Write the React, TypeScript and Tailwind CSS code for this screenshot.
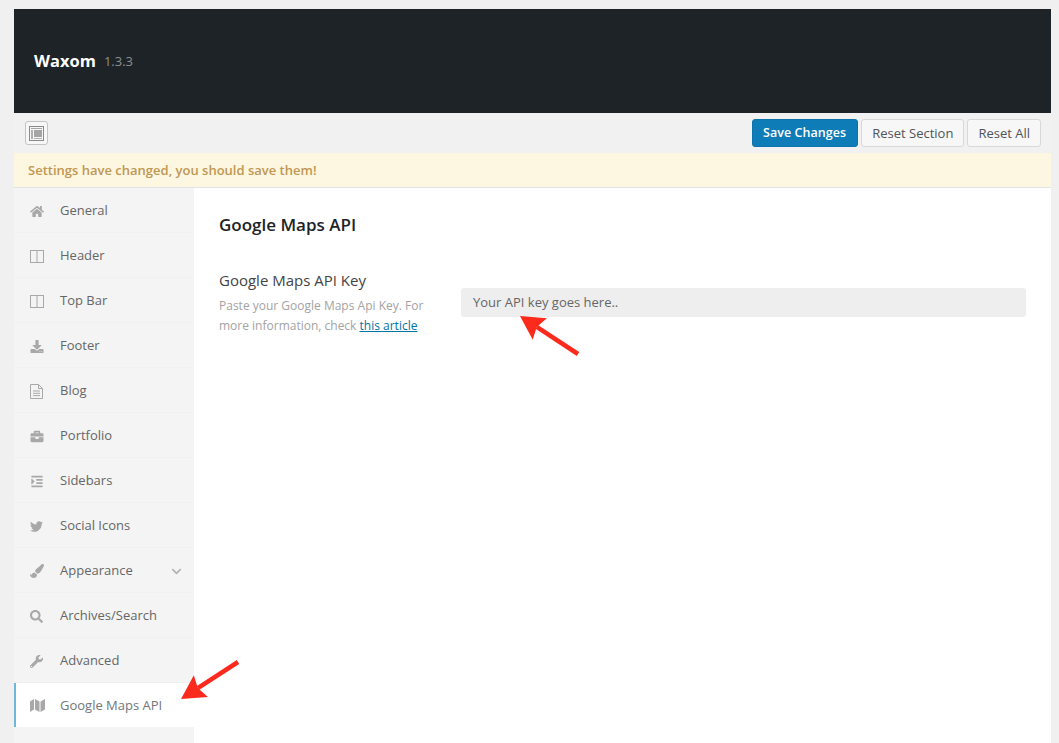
import React from "react";
import { FaHome, FaBriefcase, FaIndent, FaTwitter, FaPaintBrush, FaSearch, FaWrench, FaChevronDown, FaDownload } from "react-icons/fa";

function Columns() {
  return (
    <svg width="14" height="13" viewBox="0 0 14 13" fill="none" stroke="currentColor">
      <rect x="0.5" y="0.5" width="13" height="12" />
      <line x1="7" y1="0.5" x2="7" y2="12.5" />
    </svg>
  );
}

function FileText() {
  return (
    <svg width="13" height="15" viewBox="0 0 13 15" fill="none" stroke="currentColor">
      <path d="M0.5 0.5H8.5L12.5 4.5V14.5H0.5Z" />
      <path d="M8.5 0.5V4.5H12.5" />
      <path d="M3 7H10M3 9.3H10M3 11.6H10" />
    </svg>
  );
}

function MapIcon() {
  return (
    <svg width="15" height="15" viewBox="0 0 15 15" fill="currentColor">
      <polygon points="0,3.5 4,1 4,11.5 0,14" />
      <polygon points="5,1 9.5,3.5 9.5,14 5,11.5" />
      <polygon points="10.5,3.5 15,1 15,11.5 10.5,14" />
    </svg>
  );
}

const items: { label: string; icon: React.ReactNode; arrow?: boolean; active?: boolean }[] = [
  { label: "General", icon: <FaHome className="w-[14px] h-[13px]" /> },
  { label: "Header", icon: <Columns /> },
  { label: "Top Bar", icon: <Columns /> },
  { label: "Footer", icon: <FaDownload className="w-[14px] h-[13px]" /> },
  { label: "Blog", icon: <FileText /> },
  { label: "Portfolio", icon: <FaBriefcase className="w-[14px] h-[13px]" /> },
  { label: "Sidebars", icon: <FaIndent className="w-[14px] h-[13px]" /> },
  { label: "Social Icons", icon: <FaTwitter className="w-[13px] h-[13px]" /> },
  { label: "Appearance", icon: <FaPaintBrush className="w-[14px] h-[14px]" />, arrow: true },
  { label: "Archives/Search", icon: <FaSearch className="w-[13px] h-[13px]" /> },
  { label: "Advanced", icon: <FaWrench className="w-[13px] h-[13px]" /> },
  { label: "Google Maps API", icon: <MapIcon />, active: true },
];

function Arrow({ x1, y1, x2, y2 }: { x1: number; y1: number; x2: number; y2: number }) {
  const a = Math.atan2(y2 - y1, x2 - x1);
  const len = 27;
  const sp = 0.5;
  const p1 = [x2 - len * Math.cos(a - sp), y2 - len * Math.sin(a - sp)];
  const p2 = [x2 - len * Math.cos(a + sp), y2 - len * Math.sin(a + sp)];
  const m = [x2 - 20 * Math.cos(a), y2 - 20 * Math.sin(a)];
  return (
    <g>
      <line x1={x1} y1={y1} x2={m[0]} y2={m[1]} stroke="#fc2a1c" strokeWidth="4.5" />
      <polygon points={`${x2},${y2} ${p1[0]},${p1[1]} ${m[0]},${m[1]} ${p2[0]},${p2[1]}`} fill="#fc2a1c" />
    </g>
  );
}

export default function App() {
  return (
    <div className="relative h-[743px] overflow-hidden bg-[#f0f0f0] pl-[14px] pr-2 pt-[9px] font-['Open_Sans',sans-serif]">
      <div className="flex h-[104px] items-center bg-[#1e2327] pl-5">
        <span className="text-[16.5px] font-bold text-white">Waxom</span>
        <span className="ml-2 pt-[2px] text-[13px] text-[#8b8f92]">1.3.3</span>
      </div>
      <div className="flex h-10 items-center justify-between bg-[#f1f1f1] pl-[11px] pr-[10px]">
        <div className="flex h-6 w-[23px] items-center justify-center rounded-[3px] border border-[#c4c4c4] bg-[#f7f7f7]">
          <svg width="15" height="15" viewBox="0 0 15 15">
            <rect x="0.5" y="0.5" width="14" height="14" fill="#f7f7f7" stroke="#8a8a8a" />
            <rect x="2" y="2" width="11" height="1" fill="#a5a5a5" />
            <rect x="2" y="4" width="2" height="9" fill="#b0b0b0" />
            <rect x="5" y="4" width="8" height="7" fill="#a5a5a5" />
            <rect x="5" y="12" width="8" height="1" fill="#b0b0b0" />
          </svg>
        </div>
        <div className="flex items-center gap-[3px]">
          <button className="h-7 rounded-[3px] border border-[#0b74ae] bg-[#0e7cb6] px-[10px] pt-[1px] pr-[11px] text-[12.5px] font-semibold tracking-[0.05px] text-white">Save Changes</button>
          <button className="h-7 rounded-[3px] border border-[#d8d8d8] bg-[#f7f7f7] px-[10px] pt-[1px] text-[13px] text-[#50545a]">Reset Section</button>
          <button className="h-7 rounded-[3px] border border-[#d8d8d8] bg-[#f7f7f7] px-[10px] pt-[1px] text-[13px] text-[#50545a]">Reset All</button>
        </div>
      </div>
      <div className="flex h-[35px] items-center border-b border-[#e3e3e3] bg-[#fdf6e1] pl-[14px] pt-[1px] text-[13px] font-semibold text-[#c09853]">
        Settings have changed, you should save them!
      </div>
      <div className="flex h-[600px] bg-white">
        <ul className="w-[180px] shrink-0 bg-[#f4f4f4]">
          {items.map((it) => (
            <li
              key={it.label}
              className={
                it.active
                  ? "flex h-[44px] items-center border-l-2 border-[#6bb8da] bg-white pl-[14px] pt-[1px] text-[13px] text-[#72777c]"
                  : "flex h-[45px] items-center border-b border-[#f0f0f0] pl-4 pt-[2px] text-[13px] text-[#666666]"
              }
            >
              <span className="flex w-[30px] text-[#a8a8a8]">{it.icon}</span>
              <span>{it.label}</span>
              {it.arrow && <FaChevronDown className="ml-auto mr-3 h-[11px] w-[11px] text-[#b5b5b5]" />}
            </li>
          ))}
        </ul>
        <div className="flex-1 px-[25px] pt-[25px]">
          <h2 className="text-[17px] font-semibold leading-[24px] text-[#1e2327]">Google Maps API</h2>
          <div className="mt-[32px] flex">
            <div className="w-[242px] shrink-0">
              <div className="text-[15px] leading-[22px] text-[#444444]">Google Maps API Key</div>
              <p className="mt-[5px] w-[212px] text-[12px] leading-[20px] text-[#a3a3a3]">
                Paste your Google Maps Api Key. For more information, check{" "}
                <a className="text-[#0073aa] underline">this article</a>
              </p>
            </div>
            <div className="mt-[19px] flex h-[29px] flex-1 items-center rounded-[3px] bg-[#eeeeee] pl-3 text-[13px] text-[#666666]">
              Your API key goes here..
            </div>
          </div>
        </div>
      </div>
      <svg className="pointer-events-none absolute left-0 top-0" width="1059" height="743">
        <Arrow x1={578} y1={354} x2={520} y2={316} />
        <Arrow x1={238} y1={662} x2={181} y2={699} />
      </svg>
    </div>
  );
}
